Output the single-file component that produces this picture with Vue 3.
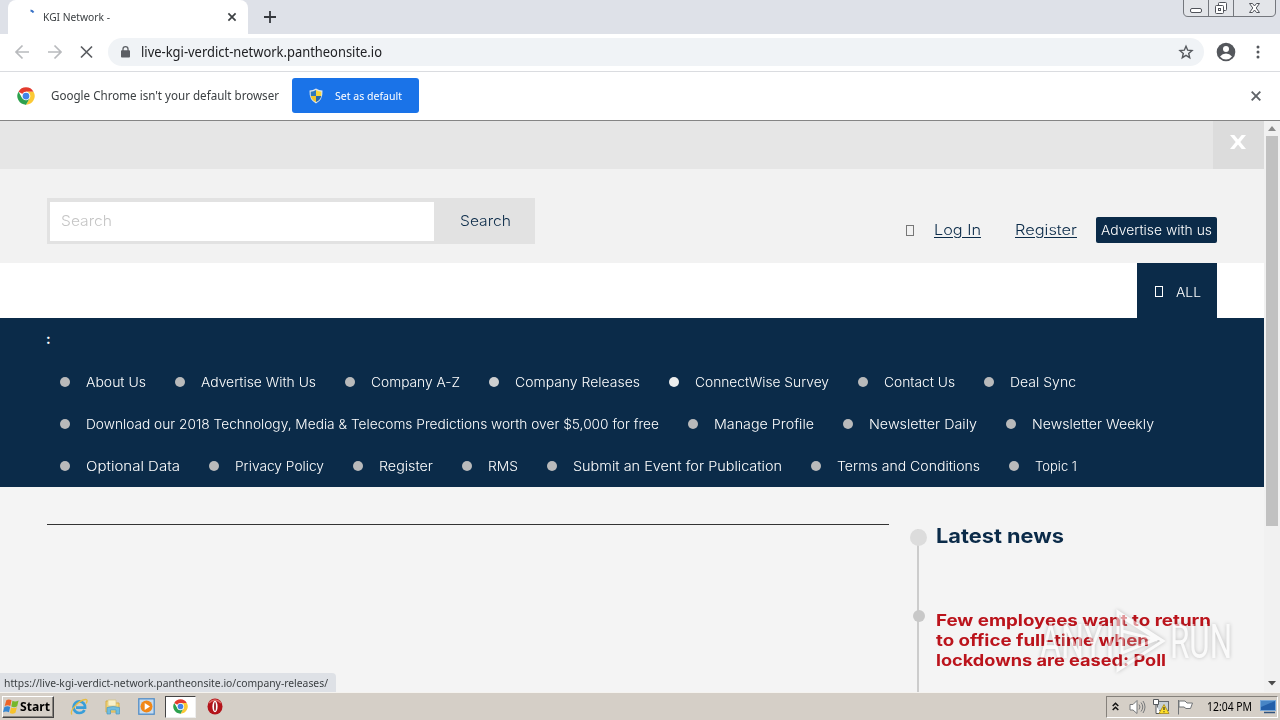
<script setup>
// Stretches a line of text horizontally so that it takes the given width.
const vFit = {
  mounted(el, { value }) {
    const natural = el.getBoundingClientRect().width
    el.style.width = value + 'px'
    const inner = el.firstElementChild
    inner.style.transform = `scaleX(${value / natural})`
  },
}

const rows = [
  [['About Us', 60], ['Advertise With Us', 115], ['Company A-Z', 89], ['Company Releases', 125, 'lit'], ['ConnectWise Survey', 134, 'bright'], ['Contact Us', 71], ['Deal Sync', 66]],
  [['Download our 2018 Technology, Media & Telecoms Predictions worth over $5,000 for free', 573], ['Manage Profile', 100], ['Newsletter Daily', 108], ['Newsletter Weekly', 122]],
  [['Optional Data', 94], ['Privacy Policy', 89], ['Register', 54], ['RMS', 30], ['Submit an Event for Publication', 209], ['Terms and Conditions', 143], ['Topic 1', 42]],
]
const headline = [['Few employees want to return', 275], ['to office full-time when', 213], ['lockdowns are eased: Poll', 230]]
</script>

<template>
  <div class="screen">
    <svg width="0" height="0" class="defs">
      <symbol id="chrome" viewBox="0 0 24 24">
        <circle cx="12" cy="12" r="11.5" fill="#fff" />
        <path d="M12 12 2 6.2A11.5 11.5 0 0 1 22 6.2H12Z" fill="#e33b2e" />
        <path d="M12 6.2h10A11.5 11.5 0 0 1 12 23.5l5-8.6Z" fill="#fbc935" />
        <path d="M2 6.2 7 14.9l5 2.9 0 5.7A11.5 11.5 0 0 1 2 6.2Z" fill="#2da14e" />
        <path d="m7 14.9 5 2.9 5-2.9-5 8.6A11.5 11.5 0 0 1 7 14.9Z" fill="#2da14e" />
        <circle cx="12" cy="12" r="5.8" fill="#fff" />
        <circle cx="12" cy="12" r="4.5" fill="#4284e8" />
      </symbol>
    </svg>

    <header class="tabs">
      <div class="tab">
        <svg class="spin" width="16" height="16" viewBox="0 0 16 16"><path d="M7.500 4.500q2 .2 3 2" fill="none" stroke="#3972c6" stroke-width="2" /></svg>
        <span v-fit="67" class="t tabname"><span>KGI Network -</span></span>
        <svg class="tabx" width="10" height="10" viewBox="0 0 10 10"><path d="m1.400 1.400 7.200 7.200m0-7.200L1.400 8.600" stroke="#3c4043" stroke-width="1.700" /></svg>
      </div>
      <svg class="plus" width="12" height="12" viewBox="0 0 12 12"><path d="M6 0v12M0 6h12" stroke="#35383d" stroke-width="1.800" /></svg>
      <svg class="winbtns" width="94" height="18" viewBox="0 0 94 18" fill="none">
        <path d="M.5 0v12q0 4.500 4.500 4.500H88q4.500 0 4.500-4.500V0" fill="#e3e5e9" stroke="#74777d" />
        <path d="M25.500 0v16M50.500 0v16" stroke="#74777d" />
        <rect x="7.500" y="8.500" width="11" height="4" rx="1.500" fill="#fff" stroke="#50535a" />
        <rect x="35.500" y="2.500" width="8" height="8" rx="1" fill="#fff" stroke="#50535a" />
        <rect x="32.500" y="5.500" width="8" height="8" rx="1" fill="#fff" stroke="#50535a" />
        <rect x="35.500" y="8.500" width="2" height="2" stroke="#50535a" />
        <path d="M66.500 3.500h3l2 2.500 2-2.500h3l-3.300 4.500 3.300 4.500h-3l-2-2.500-2 2.500h-3L69.800 8Z" fill="#fff" stroke="#50535a" />
      </svg>
    </header>

    <div class="toolbar">
      <svg class="nav" width="100" height="20" viewBox="0 0 100 20" fill="none">
        <path d="M22 10H9m6.500-6.500L9 10l6.500 6.500M41 10h13m-6.500-6.500L54 10l-6.500 6.500" stroke="#b8babd" stroke-width="1.700" />
        <path d="m74 4.500 11 11m0-11-11 11" stroke="#5a5d61" stroke-width="1.700" />
      </svg>
      <div class="omnibox">
        <svg width="9" height="14" viewBox="0 0 10 14"><rect y="5" width="10" height="8" rx="1" fill="#5b5e63" /><path d="M2.200 6V3.800a2.800 2.800 0 0 1 5.600 0V6" fill="none" stroke="#5b5e63" stroke-width="1.400" /></svg>
        <span v-fit="241" class="t url"><span>live-kgi-verdict-network.pantheonsite.io</span></span>
        <svg class="star" width="16" height="16" viewBox="0 0 16 16"><path d="m8 2.200 1.700 4 4.300.4-3.300 2.800 1 4.300L8 11.400l-3.700 2.300 1-4.300L2 6.600l4.300-.4Z" fill="none" stroke="#56595e" stroke-width="1.400" /></svg>
      </div>
      <svg class="avatar" width="20" height="20" viewBox="0 0 20 20"><circle cx="10" cy="10" r="9.300" fill="#54575c" /><circle cx="10" cy="7" r="3" fill="#fff" /><path d="M4 14.500q2.500-3 6-3t6 3q-2.300 3-6 3t-6-3Z" fill="#fff" /></svg>
      <svg class="dots" width="4" height="14" viewBox="0 0 4 14" fill="#54575c"><circle cx="2" cy="2" r="1.500" /><circle cx="2" cy="7" r="1.500" /><circle cx="2" cy="12" r="1.500" /></svg>
    </div>

    <div class="infobar">
      <svg width="18" height="18"><use href="#chrome" /></svg>
      <span v-fit="228" class="t info"><span>Google Chrome isn't your default browser</span></span>
      <div class="setdef">
        <svg width="14" height="16" viewBox="0 0 14 16">
          <path d="M7 .5Q10 2.500 13.500 2.500 14 12 7 15.500 0 12 .5 2.500 4 2.500 7 .5Z" fill="#dde5ea" />
          <path d="M7 2v6H1.800L1.700 3.700Q4.500 3.700 7 2Z" fill="#2f78bd" /><path d="M7 2v6h5.200l.1-4.300Q9.500 3.700 7 2Z" fill="#f8d53a" />
          <path d="M7 14V8H1.800Q2.500 12 7 14Z" fill="#f1c52b" /><path d="M7 14V8h5.200Q11.500 12 7 14Z" fill="#2768ad" />
        </svg>
        <span v-fit="67" class="t"><span>Set as default</span></span>
      </div>
      <svg class="infox" width="10" height="10" viewBox="0 0 10 10"><path d="m.7.7 8.600 8.600m0-8.600L.7 9.300" stroke="#5f6368" stroke-width="1.900" /></svg>
    </div>

    <div class="viewport">
      <div class="page">
        <div class="notice">
          <div class="close"><svg width="16" height="14" viewBox="0 0 16 14"><path d="M0 0h4.300L8 4.600 11.700 0H16l-5.700 7L16 14h-4.300L8 9.400 4.300 14H0l5.700-7Z" fill="#fff" /></svg></div>
        </div>
        <div class="top">
          <div class="search">
            <div class="field"><span v-fit="51" class="m"><span>Search</span></span></div>
            <div class="go"><span v-fit="51" class="m"><span>Search</span></span></div>
          </div>
          <div class="account">
            <i class="tofu"></i>
            <a class="login"><span v-fit="47" class="m"><span>Log In</span></span></a>
            <a class="register"><span v-fit="62" class="m"><span>Register</span></span></a>
            <div class="adv"><span v-fit="111" class="m"><span>Advertise with us</span></span></div>
          </div>
        </div>
        <div class="band">
          <div class="all"><i class="tofu"></i><span v-fit="25" class="m"><span>ALL</span></span></div>
        </div>
        <nav class="menu">
          <div class="colon">:</div>
          <ul v-for="(row, i) in rows" :key="i">
            <li v-for="item in row" :key="item[0]">
              <b class="dot" :class="item[2]"></b><span v-fit="item[1]" class="m"><span>{{ item[0] }}</span></span>
            </li>
          </ul>
        </nav>
        <main class="content">
          <div class="rule"></div>
          <section class="news">
            <div class="track"><b class="big"></b><b class="small"></b></div>
            <div class="stories">
              <h2><span v-fit="128" class="m"><span>Latest news</span></span></h2>
              <h3><span v-for="line in headline" :key="line[0]" v-fit="line[1]" class="m"><span>{{ line[0] }}</span></span></h3>
            </div>
          </section>
        </main>
      </div>
      <div class="scroll">
        <svg width="8" height="5" viewBox="0 0 8 5"><path d="M0 5 4 0l4 5Z" fill="#8b8b8b" /></svg>
        <div class="thumb"></div>
        <svg class="down" width="8" height="5" viewBox="0 0 8 5"><path d="m0 0 4 4.500L8 0Z" fill="#4b4b4b" /></svg>
      </div>
      <div class="status"><span v-fit="324" class="t"><span>https://live-kgi-verdict-network.pantheonsite.io/company-releases/</span></span></div>
      <svg class="mark" width="210" height="80" viewBox="1030 600 210 80">
        <g fill="#fff" font-family="Roboto, sans-serif" font-size="48">
          <text x="1040" y="658" textLength="63" lengthAdjust="spacingAndGlyphs">ANY</text>
          <text x="1170" y="658" textLength="62" lengthAdjust="spacingAndGlyphs">RUN</text>
        </g>
        <path d="M1110 623v35" stroke="#fff" stroke-width="3.500" />
        <path d="M1118 659v11l45-29-45-29v30" fill="none" stroke="#fff" stroke-width="3" />
        <path d="M1122 617v36l35-14ZM1122 631l35 9" fill="#fff" fill-opacity=".35" stroke="#fff" stroke-width="3" />
      </svg>
    </div>

    <footer class="taskbar">
      <div class="start">
        <svg width="17" height="17" viewBox="0 0 18 17"><path d="M3.500 2Q6 0 9 2L7.800 8Q5 6.200 1.800 8Z" fill="#ee6427" /><path d="M10 2.500q3 1.500 6.500-.3L15 8.200q-3 2-6.200.3Z" fill="#75b72c" /><path d="M1.500 9Q5 7.300 7.600 9l-1.300 5.700Q3.500 13 0 14.500Z" fill="#3687d2" /><path d="M8.500 9.500q3 1.500 6.200-.2L13.200 15q-3 2-6 .3Z" fill="#f6c22c" /></svg>
        <span v-fit="30" class="t"><span>Start</span></span>
      </div>
      <svg class="ie" width="18" height="18" viewBox="0 0 18 18" fill="none"><path d="M14.500 12Q13 15 9.300 15a5.800 5.800 0 1 1 5.800-5.300H6" stroke="#389ed9" stroke-width="2.700" /><path d="M2 16.500C-1 13 9 2 15.500 1.500 18 1.300 17 4 16 5.500" stroke="#e7bd42" stroke-width="1.300" /></svg>
      <svg class="folder" width="18" height="18" viewBox="0 0 18 18"><path d="M2 3h5l1 2h7v9H2Z" fill="#f4d775" stroke="#d5ac48" /><path d="M4 2h8v6H4Z" fill="#f7f0ca" stroke="#d8c37c" stroke-width=".7" /><path d="M3 9.500q6-2 12.500 0V16H12v-4H6.500v4H3Z" fill="#70bddf" stroke="#4b9ac1" stroke-width=".7" /></svg>
      <svg class="media" width="17" height="17" viewBox="0 0 17 17"><rect x=".8" y=".8" width="15.400" height="15.400" fill="#c6dcf0" stroke="#518dc7" stroke-width="1.300" /><circle cx="8.500" cy="8.500" r="6" fill="#f18717" /><path d="m6.700 5 5.300 3.500L6.700 12Z" fill="#fff" /></svg>
      <div class="active"><svg width="15" height="15"><use href="#chrome" /></svg></div>
      <svg class="opera" width="16" height="17" viewBox="0 0 16 17"><ellipse cx="8" cy="8.500" rx="7.500" ry="8" fill="#b3131a" /><path d="M2 5q6-6 12 0" fill="none" stroke="#dd6a66" stroke-width="1.500" /><ellipse cx="8" cy="8.500" rx="2.600" ry="5.800" fill="#fff" /><ellipse cx="8" cy="8.500" rx=".9" ry="4.500" fill="#94141b" /></svg>
      <div class="tray">
        <svg width="7" height="9" viewBox="0 0 7 9" fill="none" stroke="#111" stroke-width="1.500"><path d="M.7 4 3.500 1.200 6.300 4M.7 8l2.800-2.800L6.300 8" /></svg>
        <svg class="vol" width="17" height="16" viewBox="0 0 17 16" fill="none" stroke="#77797b"><path d="M1 5.500h3L8 1.500v13L4 11H1Z" fill="#fff" /><path d="M10 5.500q2 2.500 0 5M12 3.500q3.500 4.500 0 9M14 2q4 6 0 12" /></svg>
        <svg class="net" width="17" height="16" viewBox="0 0 17 16"><rect x="4.500" y="2.500" width="11" height="9" fill="#c7d0d5" stroke="#64696e" /><path d="M.5.5h5v5h-5ZM3 6v8.500h5" fill="#fff" stroke="#55595d" /><path d="m11 5.500 5 9H6Z" fill="#ffdf27" stroke="#a48717" stroke-width=".8" /><path d="M11 8v3m0 1.200v1" stroke="#333" stroke-width="1.200" /></svg>
        <svg class="flag" width="17" height="16" viewBox="0 0 17 16"><path d="M1.500 1v14.500M2 2h6l2 2h5.500l-2 5.500H9L7 8H2Z" fill="#fff" stroke="#717477" /></svg>
        <span v-fit="45" class="t"><span>12:04 PM</span></span>
        <svg class="desk" width="16" height="14" viewBox="0 0 16 14"><rect x=".5" y=".5" width="15" height="10" fill="#235fa9" stroke="#78a8d9" /><path d="M1 1h14L1 7Z" fill="#4785c5" /><path d="M4 12.500h11" stroke="#31537d" stroke-width="1.500" /></svg>
      </div>
    </footer>
  </div>
</template>

<style>
body { margin: 0; overflow: hidden; }
</style>
<style scoped>
.screen { width: 1280px; height: 720px; display: flex; flex-direction: column; overflow: hidden; background: #fff; font-family: "Noto Sans", sans-serif; position: relative; }
.defs { position: absolute; }
svg { display: block; flex: none; }
.t, .m { display: inline-block; white-space: nowrap; flex: none; }
.t > span, .m > span { display: inline-block; transform-origin: 0 50%; }
.t { font-family: "Noto Sans", sans-serif; font-size: 11px; line-height: 16px; }
.m { font-family: Inter, sans-serif; font-size: 13px; line-height: 20px; font-weight: 350; }

.tabs { height: 34px; flex: none; background: #dee1e8; display: flex; align-items: flex-start; }
.tab { margin-left: 8px; width: 240px; height: 34px; box-sizing: border-box; background: #fff; border-radius: 8px 8px 0 0; display: flex; align-items: center; padding-left: 15px; }
.spin { margin: -6px 4px 0 0; }
.tabname { color: #3c4043; }
.tabx { margin-left: auto; margin-right: 11px; }
.plus { margin: 11px 0 0 16px; }
.winbtns { margin-left: auto; margin-right: 3px; }

.toolbar { height: 36px; flex: none; padding-bottom: 1px; border-bottom: 1px solid #dadce0; display: flex; align-items: center; }
.nav { margin-left: 6px; width: 102px; }
.omnibox { width: 1096px; height: 28px; box-sizing: border-box; border-radius: 14px; background: #f0f3f6; display: flex; align-items: center; padding: 0 11px 0 13px; }
.url { margin-left: 11px; font-size: 14px; color: #202124; }
.star { margin-left: auto; margin-right: -1px; }
.avatar { margin-left: 12px; }
.dots { margin-left: 20px; }

.infobar { height: 47px; flex: none; display: flex; align-items: center; padding: 0 0 1px 17px; border-bottom: 1px solid #858585; }
.info { margin-left: 16px; font-size: 12px; color: #3c4043; }
.setdef { margin-left: 13px; width: 127px; height: 35px; background: #1a73e8; border-radius: 3px; color: #fff; display: flex; align-items: center; gap: 12px; padding-left: 17px; box-sizing: border-box; }
.infox { margin: 1px 19px 0 auto; }

.viewport { height: 571px; flex: none; display: flex; position: relative; }
.page { width: 1264px; display: flex; flex-direction: column; overflow: hidden; }
.notice { height: 48px; flex: none; background: #e6e6e6; display: flex; justify-content: flex-end; }
.close { width: 51px; background: #dcdcdc; display: flex; justify-content: center; padding: 14px 1px 0 0; box-sizing: border-box; }
.top { height: 94px; flex: none; background: #f2f2f2; display: flex; justify-content: space-between; padding: 0 47px; }
.search { margin-top: 29px; width: 488px; height: 46px; background: #e2e2e2; display: flex; }
.field { display: flex; width: 384px; height: 39px; margin: 4px 0 0 3px; background: #fff; box-sizing: border-box; padding: 9px 0 0 11px; color: #c5c5c5; }
.go { display: flex; margin: 13px 0 0 26px; color: #0b2b49; }
.field .m, .go .m, .login .m, .register .m { font-size: 14.500px; }
.account { margin-top: 48px; height: 26px; display: flex; align-items: center; color: #0b2b49; }
.login .m span, .register .m span { text-decoration: underline; text-underline-offset: 2px; }
.account a { display: flex; }
.tofu { width: 6px; height: 9px; border: 1px solid #777; }
.login { margin-left: 20px; }
.register { margin-left: 34px; }
.adv { margin-left: 19px; width: 121px; height: 26px; border-radius: 2px; background: #0b2b49; color: #fff; display: flex; align-items: center; padding-left: 5px; box-sizing: border-box; }
.band { height: 55px; flex: none; background: #fff; display: flex; justify-content: flex-end; padding-right: 47px; }
.all { width: 80px; background: #0b2b49; color: #fff; display: flex; align-items: center; gap: 13px; padding: 2px 0 0 18px; box-sizing: border-box; }
.all .tofu { border-color: #fff; }
.menu { height: 169px; flex: none; background: #0b2b49; color: #fff; }
.colon { height: 43px; padding: 12px 0 0 46px; box-sizing: border-box; font: 700 14px/18px Inter, sans-serif; }
ul { list-style: none; margin: 0; height: 42px; padding: 0 0 0 60px; display: flex; gap: 29px; }
li { display: flex; height: 42px; align-items: center; gap: 16px; }
.dot { width: 10px; height: 10px; border-radius: 50%; background: #b9babb; }
.dot.lit { background: #cecfd0; }
.dot.bright { background: #eceded; }
.content { flex: 1; background: #f4f4f4; display: flex; padding-left: 47px; }
.rule { width: 842px; height: 1px; margin-top: 37px; background: #333; }
.news { display: flex; margin-left: 21px; }
.track { width: 17px; margin-top: 42px; display: flex; flex-direction: column; align-items: center; background: linear-gradient(#ccc, #ccc) 7px 0 / 2px 100% no-repeat; }
.big { width: 17px; height: 17px; border-radius: 50%; background: #dcdcdc; flex: none; }
.small { width: 12px; height: 12px; border-radius: 50%; background: #c8c8c8; margin-top: 64px; flex: none; margin-left: 1px; }
.stories { margin-left: 9px; width: 290px; padding-top: 36px; }
h2, h3 { margin: 0; }
h2 { display: flex; height: 87px; color: #0b2b49; }
h2 .m { font-size: 20px; line-height: 26px; font-weight: 700; }
h3 { color: #bb141c; display: flex; flex-direction: column; align-items: flex-start; }
h3 .m { font-size: 16px; line-height: 20px; font-weight: 700; }

.scroll { width: 16px; background: #f1f1f1; display: flex; flex-direction: column; align-items: center; padding: 5px 0 6px; box-sizing: border-box; }
.thumb { width: 12px; height: 390px; margin-top: 5px; background: #c1c1c1; }
.down { margin-top: auto; }
.status { position: absolute; left: 0; bottom: 0; width: 336px; height: 19px; box-sizing: border-box; padding: 2px 0 0 4px; background: #dee1e6; border-top-right-radius: 4px; color: #3c4043; font-size: 0; }
.mark { position: absolute; left: 1030px; top: 479px; opacity: .55; filter: drop-shadow(0 0 2px rgba(0, 0, 0, .4)); }

.taskbar { height: 28px; flex: none; background: #d5cfc7; border-top: 1px solid #f5f3ef; box-sizing: border-box; display: flex; align-items: center; padding-right: 2px; }
.start { margin-left: 2px; width: 52px; height: 22px; box-sizing: border-box; border: 1px solid; border-color: #fff #444 #444 #fff; box-shadow: inset -1px -1px #89857f; display: flex; align-items: center; }
.start .t { font-weight: 700; font-size: 12px; color: #000; }
.ie { margin-left: 16px; }
.folder { margin-left: 16px; }
.media { margin-left: 16px; }
.active { width: 31px; height: 22px; box-sizing: border-box; margin-left: 10px; background: #fff; border: 1px solid; border-color: #444 #eee #eee #444; display: flex; align-items: center; justify-content: center; }
.opera { margin-left: 11px; }
.tray { margin-left: auto; width: 172px; height: 22px; box-sizing: border-box; border: 1px solid; border-color: #85817b #fff #fff #85817b; display: flex; align-items: center; padding-left: 5px; }
.vol { margin-left: 10px; }
.net { margin-left: 7px; }
.flag { margin-left: 7px; }
.tray .t { margin-left: 13px; font-size: 12px; color: #000; }
.desk { margin-left: 8px; }
</style>
